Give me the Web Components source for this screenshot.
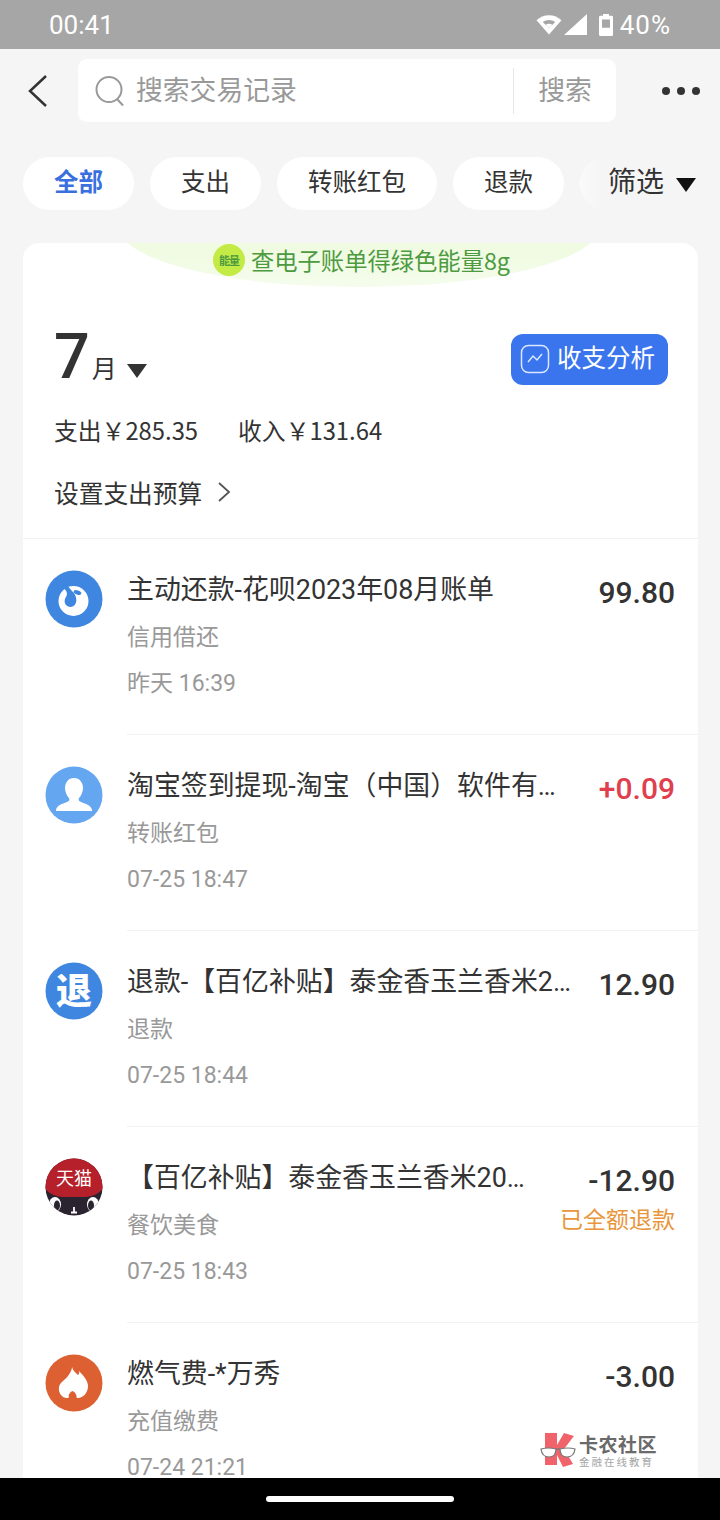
<!DOCTYPE html>
<html lang="zh">
<head>
<meta charset="utf-8">
<title>账单</title>
<style>
  html, body { margin: 0; padding: 0; background: #f5f5f5; }
  body { width: 720px; height: 1520px; overflow: hidden; font-family: "Noto Sans CJK SC", "Noto Sans", sans-serif; }
</style>
</head>
<body>
<bill-app>
  <status-bar></status-bar>
  <search-bar></search-bar>
  <filter-chips></filter-chips>
  <bill-card>
    <bill-row title="主动还款-花呗2023年08月账单" sub="信用借还" time="昨天 16:39" amount="99.80" icon="huabei"></bill-row>
    <bill-row title="淘宝签到提现-淘宝（中国）软件有…" sub="转账红包" time="07-25 18:47" amount="+0.09" tone="plus" icon="person"></bill-row>
    <bill-row title="退款-【百亿补贴】泰金香玉兰香米2…" sub="退款" time="07-25 18:44" amount="12.90" icon="refund"></bill-row>
    <bill-row title="【百亿补贴】泰金香玉兰香米20…" sub="餐饮美食" time="07-25 18:43" amount="-12.90" note="已全额退款" icon="tmall"></bill-row>
    <bill-row title="燃气费-*万秀" sub="充值缴费" time="07-24 21:21" amount="-3.00" icon="fire"></bill-row>
  </bill-card>
  <water-mark></water-mark>
  <nav-bar></nav-bar>
</bill-app>

<script>
const CJK = `"Noto Sans CJK SC", "Noto Sans", sans-serif`;

/* ================= SHELL ================= */
class BillApp extends HTMLElement {
  connectedCallback() {
    this.attachShadow({ mode: "open" }).innerHTML = `
      <style>
        :host {
          display: flex;
          flex-direction: column;
          position: relative;
          width: 720px;
          height: 1520px;
          overflow: hidden;
          background: #f5f5f5;
          font-family: ${CJK};
        }
      </style>
      <slot></slot>`;
  }
}

/* ================= STATUS BAR ================= */
class StatusBar extends HTMLElement {
  connectedCallback() {
    this.attachShadow({ mode: "open" }).innerHTML = `
      <style>
        :host {
          display: flex;
          flex: 0 0 auto;
          align-items: center;
          height: 49px;
          padding: 0 50px 0 49px;
          box-sizing: border-box;
          background: #a6a6a6;
          color: #fff;
          font: 400 26px Roboto, sans-serif;
        }
        .time { flex: 1; }
        .icons { display: flex; align-items: center; }
        .pct { letter-spacing: 1px; margin-right: -1px; }
        svg { display: block; }
      </style>
      <span class="time">00:41</span>
      <div class="icons">
        <svg width="26" height="21" viewBox="0 0 26 22" preserveAspectRatio="none" style="margin-right:2px">
          <path fill="#fff" d="M13 21.500 0.500 6.500C4 3.200 8.200 1.200 13 1.200s9 2 12.500 5.300z"/>
          <path fill="#a6a6a6" d="M13 15 6.800 8.400C8.600 7 10.700 6.200 13 6.200s4.400.8 6.200 2.200z"/>
          <path fill="#fff" d="M13 15 9.600 11.200C10.600 10.500 11.700 10.100 13 10.100s2.400.4 3.400 1.100z"/>
        </svg>
        <svg width="23" height="21" viewBox="0 0 23 21"><path fill="#fff" d="M23 0v21H0z"/></svg>
        <svg width="14" height="22" viewBox="0 0 14 24" preserveAspectRatio="none" style="margin:0 7px 0 12px">
          <path fill="#fff" d="M4 0h6v2h2.500q1.500 0 1.500 1.500V22.500q0 1.500-1.500 1.500h-11Q0 24 0 22.500V3.500Q0 2 1.500 2H4z"/>
          <rect x="3" y="6" width="8" height="9" fill="#a6a6a6"/>
        </svg>
        <span class="pct">40%</span>
      </div>`;
  }
}

/* ================= SEARCH ================= */
class SearchBar extends HTMLElement {
  connectedCallback() {
    this.attachShadow({ mode: "open" }).innerHTML = `
      <style>
        :host {
          display: flex;
          flex: 0 0 auto;
          align-items: center;
          height: 83px;
          padding: 10px 0;
          box-sizing: border-box;
          font-family: ${CJK};
        }
        .back { width: 78px; display: flex; padding-left: 28px; box-sizing: border-box; }
        .box {
          width: 538px;
          height: 63px;
          display: flex;
          align-items: center;
          background: #fff;
          border-radius: 9px;
          color: #999;
          font-size: 26.800px;
        }
        .q { margin: 0 11px 0 17px; display: block; }
        .hint { flex: 1; line-height: 60px; height: 63px; }
        .go {
          width: 103px;
          height: 46px;
          line-height: 42px;
          box-sizing: border-box;
          border-left: 1px solid #e6e6e6;
          text-align: center;
        }
        .more { display: flex; gap: 7px; margin-left: 46px; }
        .more i { width: 8px; height: 8px; border-radius: 50%; background: #333; }
      </style>
      <div class="back">
        <svg width="20" height="32" viewBox="0 0 20 32"><path d="M18 1 2 16l16 15" fill="none" stroke="#333" stroke-width="2.500"/></svg>
      </div>
      <div class="box">
        <svg class="q" width="30" height="32" viewBox="0 0 30 32" fill="none" stroke="#999" stroke-width="2">
          <circle cx="14" cy="14.500" r="12.500"/><path d="m22 24 6 6.500"/>
        </svg>
        <span class="hint">搜索交易记录</span>
        <span class="go">搜索</span>
      </div>
      <div class="more"><i></i><i></i><i></i></div>`;
  }
}

/* ================= CHIPS ================= */
class FilterChips extends HTMLElement {
  connectedCallback() {
    const chips = ["全部", "支出", "转账红包", "退款"];
    this.attachShadow({ mode: "open" }).innerHTML = `
      <style>
        :host {
          display: block;
          flex: 0 0 auto;
          position: relative;
          height: 111px;
          overflow: hidden;
          font-family: ${CJK};
        }
        .row { display: flex; gap: 16px; padding: 25px 0 0 23px; }
        .chip {
          flex: 0 0 auto;
          box-sizing: border-box;
          height: 53px;
          padding: 0 31px;
          border-radius: 27px;
          background: #fff;
          color: #333;
          font-size: 24.500px;
          line-height: 47px;
        }
        .chip.on { color: #3a6fe0; font-weight: 700; }
        .chip.blank { width: 110px; }
        .filter {
          position: absolute;
          top: 14px;
          right: 0;
          bottom: 30px;
          width: 139px;
          display: flex;
          align-items: center;
          gap: 12px;
          padding-left: 27px;
          box-sizing: border-box;
          background: linear-gradient(90deg, rgba(245,245,245,.5) 0, #f5f5f5 20px);
          color: #333;
          font-size: 28px;
        }
        .tri { display: block; margin-top: 10px; }
      </style>
      <div class="row">
        ${chips.map((c, i) => `<span class="chip ${i ? "" : "on"}">${c}</span>`).join("")}
        <span class="chip blank"></span>
      </div>
      <div class="filter">
        <span>筛选</span>
        <svg class="tri" width="20" height="14" viewBox="0 0 20 14"><path d="M0 0h20L10 14z" fill="#111"/></svg>
      </div>`;
  }
}

/* ================= CARD ================= */
class BillCard extends HTMLElement {
  connectedCallback() {
    this.attachShadow({ mode: "open" }).innerHTML = `
      <style>
        :host {
          display: block;
          flex: 1 1 auto;
          min-height: 0;
          margin: 0 22px 0 23px;
          background: #fff;
          border-radius: 16px 16px 0 0;
          overflow: hidden;
          font-family: ${CJK};
        }
        .energy {
          position: relative;
          height: 44px;
          box-sizing: border-box;
          padding: 0 0 10px 2px;
          display: flex;
          align-items: center;
          justify-content: center;
          gap: 6px;
          overflow: hidden;
          color: #4d9a40;
          font-size: 23.300px;
        }
        .energy::before {
          content: "";
          position: absolute;
          left: 96px;
          width: 480px;
          bottom: 0;
          height: 120px;
          border-radius: 50%;
          background: linear-gradient(#eefadc, #f0fbe2 70%, #f5fcec);
        }
        .energy > * { position: relative; }
        .badge {
          width: 32px;
          height: 32px;
          border-radius: 50%;
          background: #c4ea46;
          color: #4d9a40;
          font-size: 11px;
          font-weight: 700;
          line-height: 32px;
          text-align: center;
          letter-spacing: -1px;
          overflow: hidden;
        }
        .head {
          position: relative;
          height: 252px;
          box-sizing: border-box;
          padding: 38px 31px 0;
          border-bottom: 1px solid #f2f2f2;
          color: #333;
        }
        .month { display: flex; align-items: baseline; height: 72px; }
        .month b { font: 500 63px/64px Roboto, sans-serif; }
        .month span { font-size: 25px; margin-left: 2px; }
        .month svg { margin-left: 10px; }
        .analyse {
          position: absolute;
          top: 47px;
          right: 30px;
          width: 157px;
          height: 51px;
          box-sizing: border-box;
          padding-right: 4px;
          display: flex;
          align-items: center;
          justify-content: center;
          gap: 7px;
          background: #3a75ee;
          border-radius: 12px;
          color: #fff;
          font-size: 24.500px;
        }
        .analyse span { margin-top: -6px; }
        .analyse svg { display: block; margin-top: -2px; }
        .sum { display: flex; gap: 40px; font-size: 23.800px; margin-top: 12px; height: 40px; align-items: center; }
        .budget { display: flex; align-items: center; gap: 15px; font-size: 24.700px; margin-top: 23px; height: 40px; }
      </style>
      <div class="energy">
        <span class="badge">能量</span>
        <span>查电子账单得绿色能量8g</span>
      </div>
      <div class="head">
        <div class="month">
          <b>7</b><span>月</span>
          <svg width="20" height="14" viewBox="0 0 20 14"><path d="M0 0h20L10 14z" fill="#333"/></svg>
        </div>
        <div class="analyse">
          <svg width="30" height="30" viewBox="0 0 30 30" fill="none" stroke="#dbe7ff" stroke-width="1.500">
            <rect x="1.500" y="1.500" width="27" height="27" rx="7"/>
            <path d="m8 18 5-6 4 4 5-6"/>
          </svg>
          <span>收支分析</span>
        </div>
        <div class="sum"><span>支出￥285.35</span><span>收入￥131.64</span></div>
        <div class="budget">
          <span>设置支出预算</span>
          <svg width="14" height="20" viewBox="0 0 14 20"><path d="m2 1 10 9-10 9" fill="none" stroke="#555" stroke-width="1.800"/></svg>
        </div>
      </div>
      <slot></slot>`;
  }
}

/* ================= ROW ================= */
const ICONS = {
  huabei: `<circle cx="29" cy="29" r="28.500" fill="#3e86e0"/>
    <circle cx="28.500" cy="31" r="15" fill="#fff"/>
    <path fill="#3e86e0" d="M21 14 27 21C33 26 33 36 26 37 20 37 18 31 21 27 23 24 22 20 17 17z"/>
    <ellipse cx="32.500" cy="22.500" rx="4" ry="2" fill="#3e86e0" transform="rotate(20 32.500 22.500)"/>`,
  person: `<circle cx="29" cy="29" r="28.500" fill="#64a6f0"/>
    <path fill="#fff" d="M29 12c6 0 9 5 9 10 0 4-2 8-4 10-1 2 0 3 2 4 5 2 10 3 11 8 0 1 0 1-1 1H12c-1 0-1 0-1-1 1-5 6-6 11-8 2-1 3-2 2-4-2-2-4-6-4-10 0-5 3-10 9-10z"/>`,
  refund: `<circle cx="29" cy="29" r="28.500" fill="#3e86e0"/>
    <text x="29" y="42" text-anchor="middle" font-size="36" font-weight="900" fill="#fff" font-family="Noto Sans CJK SC">退</text>`,
  tmall: `<clipPath id="t"><circle cx="29" cy="29" r="28.500"/></clipPath>
    <g clip-path="url(#t)">
      <rect width="58" height="58" fill="#2a2330"/>
      <path d="M0 0h58v31q-8 8-18 8H18Q8 39 0 31z" fill="#b6202a"/>
      <ellipse cx="10" cy="46.500" rx="6" ry="7.500" fill="#fff"/><ellipse cx="48" cy="46.500" rx="6" ry="7.500" fill="#fff"/>
      <ellipse cx="12" cy="47.500" rx="3" ry="5" fill="#2a2330"/><ellipse cx="46" cy="47.500" rx="3" ry="5" fill="#2a2330"/>
      <path d="M29 49v5M26 54.500h6" stroke="#fff" stroke-width="1.800" fill="none"/>
    </g>
    <text x="29" y="27" text-anchor="middle" font-size="18" fill="#fff" font-family="Noto Sans CJK SC">天猫</text>`,
  fire: `<circle cx="29" cy="29" r="28.500" fill="#dc6032"/>
    <path fill="#fff" d="M27 13C28 17 31 19 33 21 34 20 34.500 19 34 17 39 22 43 27 43 32 43 39 38 44 33 44 32 44 31.500 43.500 31.500 43 32 41 30 38 27.500 37 25 38 23 41 24 43 24 43.500 23 44 22 44 17 44 13 39 14 33 15 28 20 26 23 22 25 19 27 16 27 13z"/>`
};

class BillRow extends HTMLElement {
  connectedCallback() {
    const a = n => this.getAttribute(n) || "";
    const plus = a("tone") === "plus";
    this.attachShadow({ mode: "open" }).innerHTML = `
      <style>
        :host {
          display: flex;
          position: relative;
          height: 196px;
          box-sizing: border-box;
          padding: 31px 22px 0 22px;
          color: #333;
        }
        .ic { flex: 0 0 58px; margin-right: 24px; display: block; }
        .main { flex: 1; min-width: 0; }
        .title {
          height: 40px;
          line-height: 40px;
          font-family: Roboto, ${CJK};
          font-size: 26.900px;
          white-space: nowrap;
        }
        .sub, .time { font-size: 23px; color: #999; height: 46px; line-height: 46px; }
        .sub { margin-top: 2px; }
        .time { font-family: Roboto, ${CJK}; margin-top: 3px; }
        .right { position: absolute; top: 32px; right: 23px; text-align: right; }
        .amt {
          font: 500 30px/44px Roboto, sans-serif;
          color: ${plus ? "#e0404e" : "#333"};
        }
        .note { font-size: 23px; line-height: 34px; color: #e8963c; margin-top: -2px; }
        .line { position: absolute; left: 104px; right: 0; bottom: 0; height: 1px; background: #f2f2f2; }
      </style>
      <svg class="ic" width="58" height="58" viewBox="0 0 58 58">${ICONS[a("icon")]}</svg>
      <div class="main">
        <div class="title">${a("title")}</div>
        <div class="sub">${a("sub")}</div>
        <div class="time">${a("time")}</div>
      </div>
      <div class="right">
        <div class="amt">${a("amount")}</div>
        ${a("note") ? `<div class="note">${a("note")}</div>` : ""}
      </div>
      <div class="line"></div>`;
  }
}

/* ================= WATERMARK ================= */
class WaterMark extends HTMLElement {
  connectedCallback() {
    this.attachShadow({ mode: "open" }).innerHTML = `
      <style>
        :host {
          position: absolute;
          left: 540px;
          top: 1433px;
          display: flex;
          gap: 3px;
          font-family: ${CJK};
        }
        svg { display: block; margin-top: -1px; }
        .t { font-size: 19px; line-height: 22px; font-weight: 700; color: #6a6a6a; letter-spacing: .5px; }
        .s { font-size: 10.500px; line-height: 13px; color: #a5a5a5; letter-spacing: 2px; }
      </style>
      <svg width="36" height="36" viewBox="0 0 36 36">
        <path fill="#f0636b" d="M5 1h12v12l7-12 10 3-10 13 9 15-10 3-6-12v10H5z"/>
        <g fill="#fff" stroke="#777" stroke-width="1.200"><path d="M1 17q7-2 15 0 0 8-7 8-7 0-8-8z"/><path d="M35 17q-7-2-15 0 0 8 7 8 7 0 8-8z"/><path d="M16 17h4" fill="none"/></g>
      </svg>
      <div><div class="t">卡农社区</div><div class="s">金融在线教育</div></div>`;
  }
}

/* ================= NAV BAR ================= */
class NavBar extends HTMLElement {
  connectedCallback() {
    this.attachShadow({ mode: "open" }).innerHTML = `
      <style>
        :host {
          display: flex;
          flex: 0 0 auto;
          align-items: center;
          justify-content: center;
          height: 42px;
          background: #000;
        }
        i { width: 188px; height: 6px; border-radius: 3px; background: #fff; }
      </style>
      <i></i>`;
  }
}

customElements.define("bill-app", BillApp);
customElements.define("status-bar", StatusBar);
customElements.define("search-bar", SearchBar);
customElements.define("filter-chips", FilterChips);
customElements.define("bill-card", BillCard);
customElements.define("bill-row", BillRow);
customElements.define("water-mark", WaterMark);
customElements.define("nav-bar", NavBar);
</script>
</body>
</html>
